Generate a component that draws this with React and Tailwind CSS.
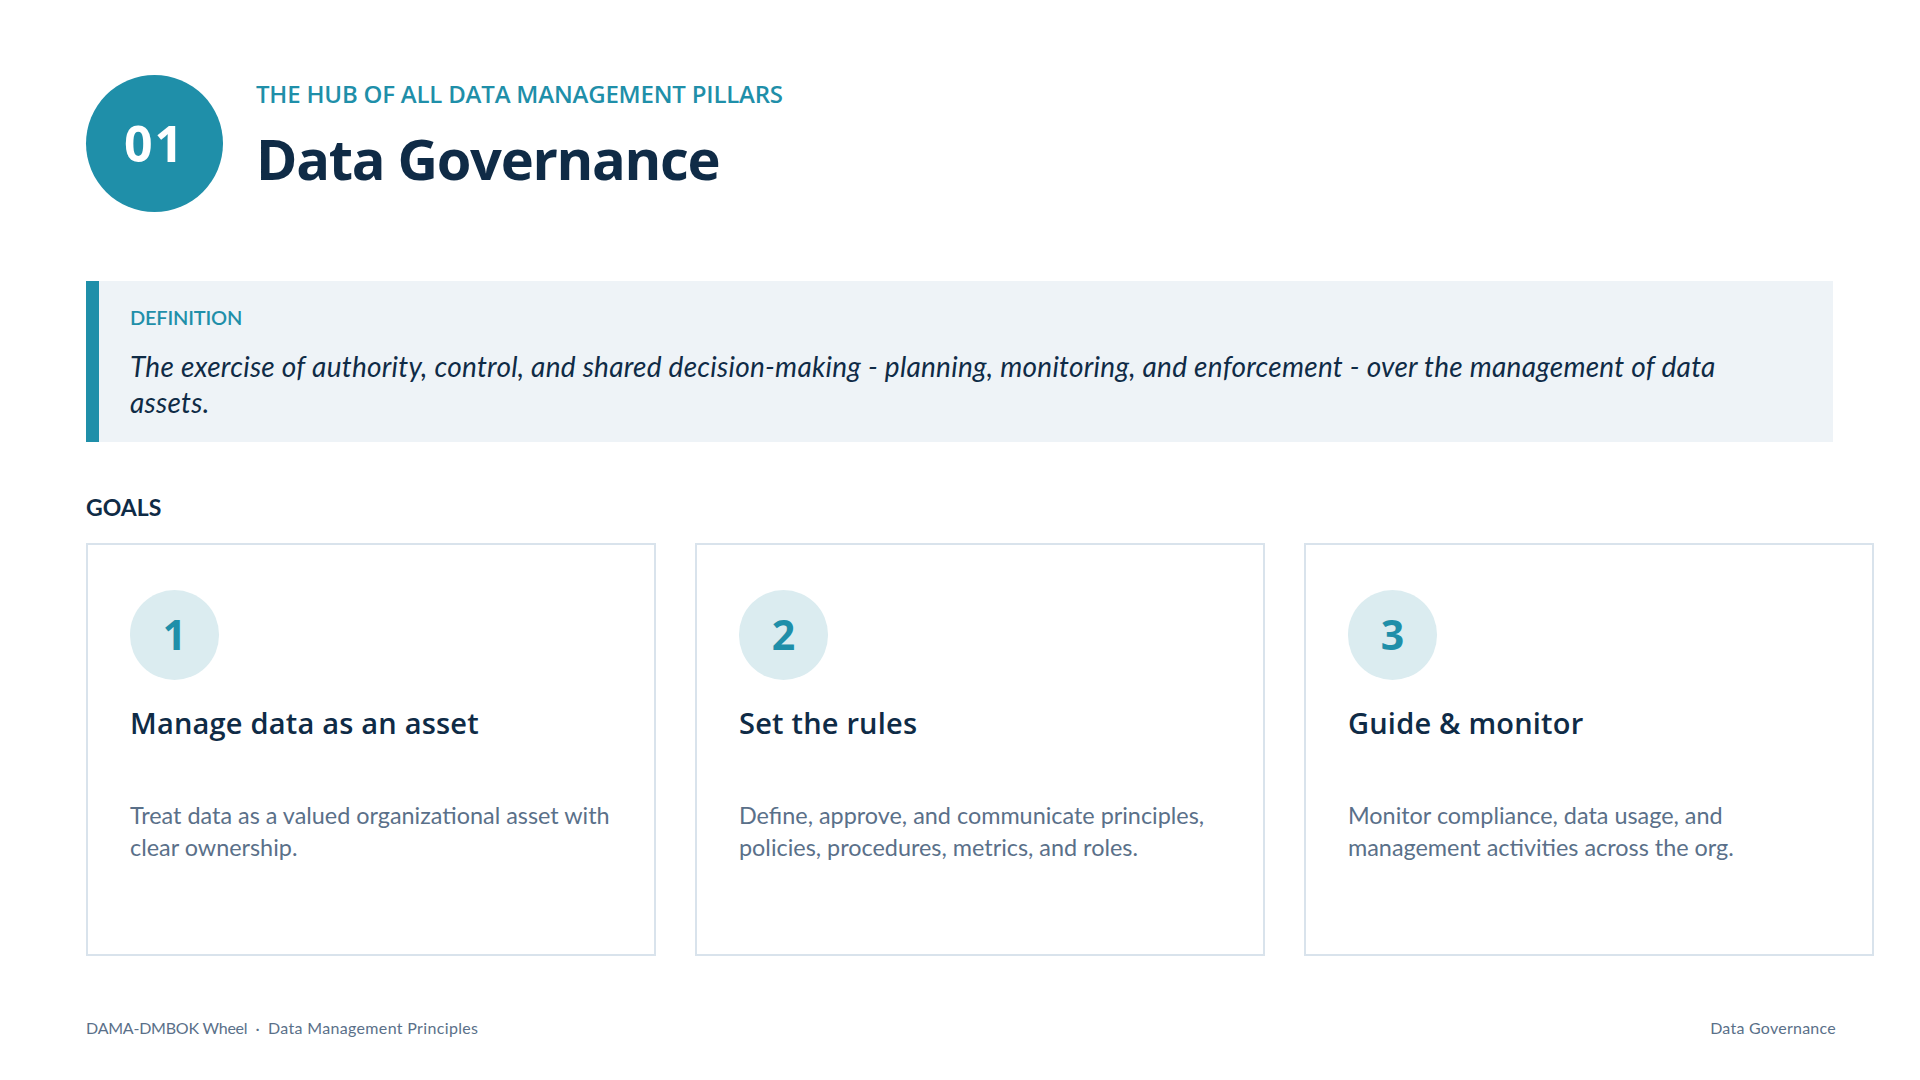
const goals = [
  { n: '1', title: 'Manage data as an asset', body: ['Treat data as a valued organizational asset with', 'clear ownership.'] },
  { n: '2', title: 'Set the rules', body: ['Define, approve, and communicate principles,', 'policies, procedures, metrics, and roles.'] },
  { n: '3', title: 'Guide & monitor', body: ['Monitor compliance, data usage, and', 'management activities across the org.'] },
];

function GoalCard({ goal }) {
  return (
    <div className="w-[570px] h-[413px] shrink-0 border-2 border-[#d9e3ec] bg-white pl-[42px] pt-[45px]">
      <div className="w-[89px] h-[90px] rounded-full bg-[#dbecf0] flex items-center justify-center font-['Open_Sans'] font-bold text-[41px] text-[#1f8fa9]">
        {goal.n}
      </div>
      <h3 className="mt-[23px] font-['Open_Sans'] font-semibold text-[29px] leading-[40px] text-[#0f2b46] tracking-[0.2px]">{goal.title}</h3>
      <p className="mt-[57px] font-['Lato'] text-[23.4px] leading-[31.5px] text-[#5a7089]">
        {goal.body.map((line) => (
          <span key={line} className="block whitespace-nowrap">{line}</span>
        ))}
      </p>
    </div>
  );
}

export default function App() {
  return (
    <div className="w-[1920px] h-[1080px] bg-white overflow-hidden flex flex-col pt-[75px] px-[86px]">
      {/* Header */}
      <div className="flex items-center gap-[33px]">
        <div className="w-[137px] h-[137px] rounded-full bg-[#1f8fa9] flex items-center justify-center font-['Open_Sans'] font-bold text-[50px] text-white tracking-[2px]">
          01
        </div>
        <div className="-mt-[17px]">
          <div className="font-['Open_Sans'] font-semibold text-[24px] leading-[32px] text-[#1f8fa9] tracking-[-0.2px]">THE HUB OF ALL DATA MANAGEMENT PILLARS</div>
          <h1 className="mt-[13px] font-['Open_Sans'] font-bold text-[56px] leading-[70px] text-[#0f2b46] tracking-[-1.3px]">Data Governance</h1>
        </div>
      </div>

      {/* Definition */}
      <div className="mt-[69px] mr-[1px] h-[161px] bg-[#eef3f7] border-l-[13px] border-[#1f8fa9] pl-[31px] pt-[23px]">
        <div className="font-['Lato'] font-semibold text-[20px] leading-[26px] text-[#1f8fa9] tracking-[-0.2px]">DEFINITION</div>
        <p className="mt-[18px] font-['Lato'] italic text-[28px] leading-[36px] text-[#0f2b46] tracking-[0.26px] pr-[60px]">
          The exercise of authority, control, and shared decision-making - planning, monitoring, and enforcement - over the management of data assets.
        </p>
      </div>

      {/* Goals */}
      <div className="mt-[50px] font-['Lato'] font-bold text-[23px] leading-[30px] text-[#0f2b46]">GOALS</div>
      <div className="mt-[21px] flex gap-[39px]">
        {goals.map((g) => <GoalCard key={g.n} goal={g} />)}
      </div>

      {/* Footer */}
      <div className="mt-[60px] -mr-[2px] flex justify-between font-['Lato'] text-[16px] leading-[24px] text-[#5a7089]">
        <span>
          <span className="tracking-[-0.23px]">DAMA-DMBOK Wheel</span>
          &nbsp; ·&nbsp; <span className="tracking-[0.34px]">Data Management Principles</span>
        </span>
        <span className="tracking-[0.25px]">Data Governance</span>
      </div>
    </div>
  );
}
